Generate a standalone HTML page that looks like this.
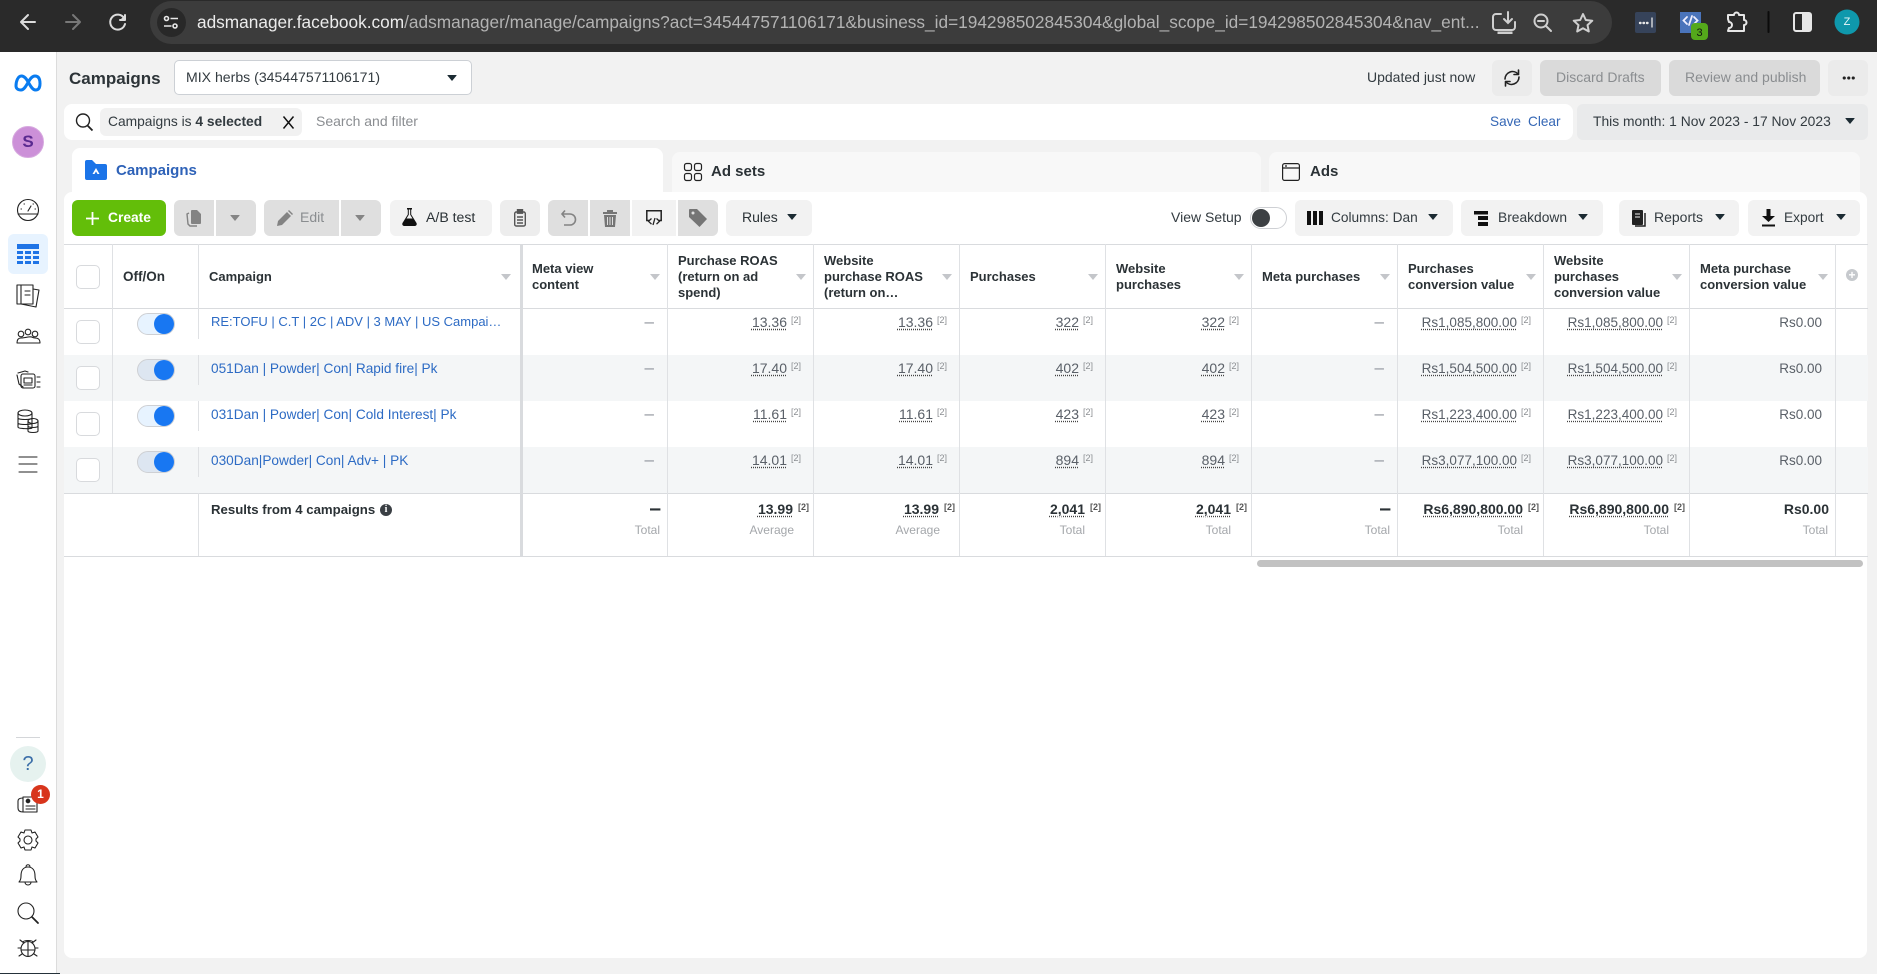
<!DOCTYPE html>
<html><head><meta charset="utf-8"><title>Campaigns</title>
<style>
*{box-sizing:border-box}
html,body{margin:0;padding:0;width:1877px;height:974px;overflow:hidden;background:#f2f2f2;font-family:"Liberation Sans",Arial,sans-serif;color:#1c2b33}
.a,.t,svg.a{position:absolute}
.t{white-space:nowrap;line-height:16px;font-size:14px}
.b{position:absolute;top:200px;height:36px;border-radius:6px;background:#f2f2f2}
.g{background:#dfdfdf}
.car{position:absolute;width:0;height:0;border-left:5.500px solid transparent;border-right:5.500px solid transparent;border-top:6.500px solid #1c2b33;border-radius:1px}
.hc{position:absolute;top:274px;width:0;height:0;border-left:5px solid transparent;border-right:5px solid transparent;border-top:6px solid #c4c6ca}
.v{position:absolute;top:244px;width:1px;height:312px;background:#dfe1e4}
.h{position:absolute;left:64px;width:1804px;height:1px;background:#d9dbde}
.th{position:absolute;font-weight:700;font-size:13px;line-height:16px;white-space:nowrap;color:#2b3236}
.cb{position:absolute;left:76px;width:24px;height:24px;border:1px solid #d8dadd;border-radius:5px;background:#fff}
.tg{position:absolute;left:137px;width:38px;height:22px;border-radius:11px;background:#e7f3ff;border:1px solid #ced0d4}
.tg.k{background:#dde6f1}
.tg:after{content:"";position:absolute;right:0;top:0;width:20px;height:20px;border-radius:50%;background:#1877f2}
.n{position:absolute;left:211px;font-size:13.650px;line-height:16px;margin-top:1px;color:#2d6bc4;white-space:nowrap}
.c{position:absolute;width:146px;height:20px;padding-right:13px;text-align:right;font-size:14px;line-height:16px;color:#5a6068;white-space:nowrap}
.m{font-size:13.500px;margin-top:1px}
.c u{text-decoration:underline dotted #444;text-underline-offset:2px}
.c sup{font-size:9px;line-height:0;vertical-align:4px;margin-left:4px;color:#8a8d91;display:inline-block;width:9px;text-align:right}
.d{color:#90949c;font-size:17px}
.s{font-weight:700;color:#2b3236;padding-right:6px}
.s.e{font-size:21px}
.s sup{color:#555;margin-left:5px}
.l{position:absolute;font-size:12px;line-height:14px;color:#a4a7ab;text-align:right;width:146px;white-space:nowrap}
svg{overflow:visible}
</style></head><body>

<!-- browser chrome -->
<div class="a" style="left:0;top:0;width:1877px;height:52px;background:#2a2a2a"></div>
<svg class="a" style="left:0;top:0" width="130" height="52" fill="none" stroke-linecap="round" stroke-linejoin="round">
<path d="M35 22H21M28 15 21 22 28 29" stroke="#dcdcdc" stroke-width="2"/>
<path d="M66 22H80M73 15 80 22 73 29" stroke="#787878" stroke-width="2"/>
<path d="M124 18a7.500 7.500 0 1 0 1 6" stroke="#dcdcdc" stroke-width="2"/><path d="M125 15v5h-5" stroke="#dcdcdc" stroke-width="2" fill="#dcdcdc"/>
</svg>
<div class="a" style="left:150px;top:1px;width:1462px;height:43px;border-radius:22px;background:#3c3c3c"></div>
<div class="a" style="left:157px;top:8px;width:29px;height:29px;border-radius:50%;background:#282828"></div>
<svg class="a" style="left:163px;top:15px" width="16" height="15" fill="none" stroke="#e8e8e8" stroke-width="1.600"><circle cx="3.500" cy="3.500" r="2"/><path d="M7.500 3.500H15M1 11h7.500"/><circle cx="12" cy="11" r="2"/></svg>
<div class="t" style="left:197px;top:12px;font-size:17.250px;line-height:20px;color:#ececec">adsmanager.facebook.com<span style="color:#b3b3b3">/adsmanager/manage/campaigns?act=345447571106171&amp;business_id=194298502845304&amp;global_scope_id=194298502845304&amp;nav_ent...</span></div>
<svg class="a" style="left:1480px;top:0" width="397" height="52" fill="none" stroke-linecap="round">
<path d="M21 14h-5a3 3 0 0 0-3 3v10a3 3 0 0 0 3 3h16a3 3 0 0 0 3-3v-5" stroke="#cfcfcf" stroke-width="2"/>
<path d="M28 12v11M24 19l4 4 4-4" stroke="#cfcfcf" stroke-width="2"/><path d="M18 32h14v1.500H18z" fill="#cfcfcf" stroke="#cfcfcf"/>
<circle cx="61" cy="21" r="6.500" stroke="#cfcfcf" stroke-width="2"/><path d="M66 26l5 5M58 21h6" stroke="#cfcfcf" stroke-width="2"/>
<path d="M103 14l2.800 6 6.500.7-4.800 4.400 1.300 6.400-5.800-3.300-5.800 3.300 1.300-6.400-4.800-4.400 6.500-.7z" stroke="#cfcfcf" stroke-width="2" stroke-linejoin="round"/>
<rect x="155" y="12" width="21" height="21" rx="2" fill="#36435a"/><path d="M160 23h8" stroke="#e8e8e8" stroke-width="2.400" stroke-dasharray=".5 3"/><path d="M172 18v9" stroke="#e8e8e8" stroke-width="1.300"/>
<rect x="200" y="12" width="21" height="21" fill="#4a74bb"/><path d="M207 17l-3.500 3.500 3.500 3.500M214 17l3.500 3.500-3.500 3.500M212 16l-3 9" stroke="#eef" stroke-width="1.800"/>
<rect x="211" y="23" width="17" height="17" rx="4" fill="#54a81b"/>
<path d="M248 15h6a2.500 2.500 0 0 1 5 0h5v5a2.500 2.500 0 0 1 0 5v6h-16l1-3a3 3 0 0 0 0-6l-1-3z" stroke="#e6e6e6" stroke-width="2" stroke-linejoin="round"/>
<path d="M288.500 12v20" stroke="#0b0b0b" stroke-width="2"/>
<rect x="314" y="13" width="17" height="18" rx="2" stroke="#e6e6e6" stroke-width="2"/><rect x="322" y="13" width="9" height="18" fill="#e6e6e6"/>
<circle cx="367" cy="22" r="12.500" fill="#0f98ac"/>
</svg>
<div class="t" style="left:1691px;top:25px;width:17px;text-align:center;font-size:11px;color:#111">3</div>
<div class="t" style="left:1840px;top:14px;width:14px;text-align:center;font-size:11px;color:#e8f7f9">Z</div>

<!-- sidebar -->
<div class="a" style="left:0;top:52px;width:57px;height:922px;background:#fff;border-right:1px solid #dcdcdc"></div>
<div class="a" style="left:0;top:973px;width:60px;height:1px;background:#25323a"></div>
<svg class="a" style="left:14px;top:73px" width="28" height="19" fill="none"><path d="M2 13C2 8 4 3 7.500 3c3 0 5 3 7 6.500s4 7.500 7 7.500c3 0 4.500-2 4.500-6.500S24.500 3 21 3c-3 0-5 3-7 6.500S10 17 7 17c-3 0-5-1.500-5-4z" stroke="#0a7cf0" stroke-width="3"/></svg>
<div class="a" style="left:12px;top:126px;width:32px;height:32px;border-radius:50%;background:#cc90d8;border:1px solid #d7a9df;text-align:center;font:700 17px/30px 'Liberation Sans',sans-serif;color:#5a2a90">S</div>
<div class="a" style="left:8px;top:234px;width:40px;height:40px;border-radius:6px;background:#e7f3ff"></div>
<svg class="a" style="left:0;top:190px" width="57" height="300" fill="none" stroke="#222" stroke-width="1.100" stroke-linecap="round" stroke-linejoin="round">
<circle cx="28" cy="20" r="10.500"/><path d="M18 24h20" /><path d="M28 21l3-5M21 19h.5M24 14h.5M33 14h.5M35 19h.5"/>
<g stroke="none" fill="#1f74e6"><rect x="17" y="54" width="22" height="5"/><rect x="17" y="61" width="6" height="3"/><rect x="25" y="61" width="6" height="3"/><rect x="33" y="61" width="6" height="3"/><rect x="17" y="66" width="6" height="3"/><rect x="25" y="66" width="6" height="3"/><rect x="33" y="66" width="6" height="3"/><rect x="17" y="71" width="6" height="3"/><rect x="25" y="71" width="6" height="3"/><rect x="33" y="71" width="6" height="3"/></g>
<path d="M17 95h16v19H17zM21 95v19M25 101h5M25 105h5M33 99l6 1-3 17-15-3"/>
<circle cx="21" cy="144" r="2.800"/><circle cx="28" cy="142" r="2.800"/><circle cx="35" cy="144" r="2.800"/><path d="M17 153c0-4 2-5 4-5s2 0 7-1 4 1 7 1 5 1 5 5H17z"/>
<path d="M18 183l7-2 3 1M17 185l2 9 4 3"/><rect x="21" y="184" width="14" height="14" rx="2"/><path d="M24 188h8v5h-8zM24 195h8M37 187h3M37 192h3M37 197h3"/>
<ellipse cx="25" cy="223" rx="7" ry="3"/><path d="M18 223v14c0 2 14 2 14 1V223M18 228c0 2 14 2 14 0M18 233c0 2 14 2 14 0"/><ellipse cx="33" cy="231" rx="5" ry="2.500"/><path d="M28 231v10c0 2 10 2 10 0v-10M28 236c0 2 10 2 10 0"/>
<path d="M19 267h18M19 274h18M19 282h18"/>
</svg>
<div class="a" style="left:16px;top:737px;width:24px;height:1px;background:#d4d6d9"></div>
<div class="a" style="left:10px;top:746px;width:36px;height:36px;border-radius:50%;background:#e6f2ef;text-align:center;font:20px/36px 'Liberation Sans',sans-serif;color:#3b6ea8">?</div>
<svg class="a" style="left:0;top:790px" width="57" height="175" fill="none" stroke="#222" stroke-width="1.100" stroke-linecap="round" stroke-linejoin="round">
<path d="M23 7h14v15H23c-3 0-5-1-5-4v-7c0-2 2-3 5-3zM23 7v15"/><circle cx="28" cy="11" r="1.800" fill="#222"/><path d="M26 16h9M26 19h9"/>
<circle cx="28" cy="50" r="4"/><path d="M25 40h6l1 3 3-1 3 5-2 2v2l2 2-3 5-3-1-1 3h-6l-1-3-3 1-3-5 2-2v-2l-2-2 3-5 3 1z"/>
<path d="M28 77c-5 0-7 4-7 9 0 3-1 5-2 6h18c-1-1-2-3-2-6 0-5-2-9-7-9zM26 77c0-3 4-3 4 0M25 92c0 4 6 4 6 0"/>
<circle cx="26" cy="121" r="8"/><path d="M32 127l6 6" stroke-width="1.800"/>
<path d="M28 152v14M21 160h14"/><ellipse cx="28" cy="159" rx="7" ry="7.500"/><path d="M20 150l4 3M36 150l-4 3M18 158h3M35 158h3M19 166l3-2M37 166l-3-2M23 152c1-2 9-2 10 0"/>
</svg>
<div class="a" style="left:31px;top:785px;width:19px;height:19px;border-radius:50%;background:#d8351c;color:#fff;text-align:center;font:700 12px/19px 'Liberation Sans',sans-serif">1</div>

<!-- top header -->
<div class="t" style="left:69px;top:70px;font-size:17px;line-height:18px;font-weight:700;color:#2d3438">Campaigns</div>
<div class="a" style="left:174px;top:60px;width:298px;height:35px;background:#fff;border:1px solid #ccd0d5;border-radius:5px"></div>
<div class="t" style="left:186px;top:69px;font-size:14.100px;color:#333b40">MIX herbs (345447571106171)</div>
<div class="car" style="left:447px;top:75px"></div>
<div class="t" style="left:1367px;top:69px;color:#333b40">Updated just now</div>
<div class="a" style="left:1492px;top:60px;width:40px;height:36px;border-radius:6px;background:#ebebeb"></div>
<svg class="a" style="left:1492px;top:60px" width="40" height="36" fill="none" stroke="#222" stroke-width="1.600" stroke-linecap="round" stroke-linejoin="round"><path d="M26 14a7.500 7.500 0 0 0-13 5M14 22a7.500 7.500 0 0 0 13-5"/><path d="M26.500 10v4.500H22M13.500 26v-4.500H18"/></svg>
<div class="a" style="left:1540px;top:60px;width:121px;height:36px;border-radius:6px;background:#dadada"></div>
<div class="t" style="left:1556px;top:69px;color:#8a8d90">Discard Drafts</div>
<div class="a" style="left:1669px;top:60px;width:151px;height:36px;border-radius:6px;background:#dadada"></div>
<div class="t" style="left:1685px;top:69px;color:#8a8d90">Review and publish</div>
<div class="a" style="left:1828px;top:60px;width:40px;height:36px;border-radius:6px;background:#ebebeb"></div>
<div class="a" style="left:1842px;top:76px;width:13px;height:4px;background:radial-gradient(circle,#222 1.500px,transparent 1.700px) 0 0/4.500px 4px"></div>

<!-- search row -->
<div class="a" style="left:64px;top:104px;width:1509px;height:36px;border-radius:8px;background:#fff"></div>
<svg class="a" style="left:75px;top:113px" width="20" height="18" fill="none" stroke="#222" stroke-width="1.400"><circle cx="8" cy="7.500" r="6.500"/><path d="M12.500 12.500l5 5" stroke-width="1.800"/></svg>
<div class="a" style="left:100px;top:108px;width:202px;height:28px;border-radius:6px;background:#f1f1f1"></div>
<div class="t" style="left:108px;top:114px;font-size:13.800px;color:#333b40">Campaigns is <b>4 selected</b></div>
<svg class="a" style="left:283px;top:116px" width="11" height="13" stroke="#111" stroke-width="1.500"><path d="M.500.500l10 12M10.500.500l-10 12"/></svg>
<div class="t" style="left:316px;top:113px;color:#8a8d91">Search and filter</div>
<div class="t" style="left:1490px;top:114px;font-size:13.600px;color:#3567b5">Save</div>
<div class="t" style="left:1528px;top:114px;font-size:13.600px;color:#3567b5">Clear</div>
<div class="a" style="left:1577px;top:104px;width:291px;height:36px;border-radius:6px;background:#e9eaeb"></div>
<div class="t" style="left:1593px;top:113px;font-size:13.850px;color:#333b40">This month: 1 Nov 2023 - 17 Nov 2023</div>
<div class="car" style="left:1845px;top:118px"></div>

<!-- tabs -->
<div class="a" style="left:72px;top:148px;width:591px;height:50px;background:#fff;border-radius:8px 8px 0 0"></div>
<div class="a" style="left:672px;top:152px;width:589px;height:46px;background:#f8f8f8;border-radius:8px 8px 0 0"></div>
<div class="a" style="left:1269px;top:152px;width:591px;height:46px;background:#f8f8f8;border-radius:8px 8px 0 0"></div>
<svg class="a" style="left:85px;top:160px" width="22" height="20"><path d="M0 2a2 2 0 0 1 2-2h5l4 4h9a2 2 0 0 1 2 2v12a2 2 0 0 1-2 2H2a2 2 0 0 1-2-2z" fill="#1b74e8"/><path d="M11 8l3.500 6h-2L11 11.500 9.500 14h-2z" fill="#fff"/></svg>
<div class="t" style="left:116px;top:163px;font-size:15px;font-weight:700;color:#2e62b8">Campaigns</div>
<svg class="a" style="left:684px;top:163px" width="18" height="18" fill="none" stroke="#222" stroke-width="1.200"><rect x=".5" y=".5" width="7" height="7" rx="2"/><rect x="10.500" y=".5" width="7" height="7" rx="2"/><rect x=".5" y="10.500" width="7" height="7" rx="2"/><rect x="10.500" y="10.500" width="7" height="7" rx="2"/></svg>
<div class="t" style="left:711px;top:164px;font-size:15px;font-weight:700;color:#2b3236">Ad sets</div>
<svg class="a" style="left:1282px;top:163px" width="18" height="18" fill="none" stroke="#222" stroke-width="1.200"><rect x=".6" y=".6" width="16.800" height="16.800" rx="2"/><path d="M1 5h16M3 3h2"/></svg>
<div class="t" style="left:1310px;top:164px;font-size:15px;font-weight:700;color:#2b3236">Ads</div>

<!-- main card -->
<div class="a" style="left:64px;top:192px;width:1803px;height:766px;background:#fff;border-radius:8px"></div>

<!-- toolbar left -->
<div class="b" style="left:72px;width:94px;background:#63be09"></div>
<svg class="a" style="left:86px;top:212px" width="13" height="13" stroke="#fff" stroke-width="1.800"><path d="M6.500 0v13M0 6.500h13"/></svg>
<div class="t" style="left:108px;top:210px;font-size:13.800px;font-weight:700;color:#fff">Create</div>
<div class="b g" style="left:174px;width:40px;border-radius:6px 0 0 6px"></div>
<svg class="a" style="left:185px;top:209px" width="18" height="18"><path d="M7 1h5l4 4v9a1 1 0 0 1-1 1H7a1 1 0 0 1-1-1V2a1 1 0 0 1 1-1z" fill="#838383"/><path d="M4 4L2 5l1 10 2 2h7" fill="none" stroke="#838383" stroke-width="1.400"/></svg>
<div class="b g" style="left:216px;width:40px;border-radius:0 6px 6px 0"></div>
<div class="car" style="left:230px;top:215px;border-top-color:#858585"></div>
<div class="b g" style="left:264px;width:75px;border-radius:6px 0 0 6px"></div>
<svg class="a" style="left:277px;top:210px" width="16" height="16"><path d="M0 16l1-5L10 2l4 4-9 9zM11 1l1-1 4 4-1 1z" fill="#838383"/></svg>
<div class="t" style="left:300px;top:209px;color:#8a8d90">Edit</div>
<div class="b g" style="left:341px;width:40px;border-radius:0 6px 6px 0"></div>
<div class="car" style="left:355px;top:215px;border-top-color:#858585"></div>
<div class="b" style="left:390px;width:102px"></div>
<svg class="a" style="left:402px;top:208px" width="15" height="18"><path d="M5 0h5v1.500H9.200v5L14.500 15a2 2 0 0 1-1.700 3H2.200A2 2 0 0 1 .5 15L5.800 6.500v-5H5z" fill="#111"/><path d="M6.800 1.500v5.300L4.500 10.500h6L8.200 6.800V1.500z" fill="#f2f2f2"/></svg>
<div class="t" style="left:426px;top:209px;font-size:14.100px;color:#2b3236">A/B test</div>
<div class="b" style="left:500px;width:40px;background:#ededed"></div>
<svg class="a" style="left:514px;top:209px" width="12" height="18" fill="none" stroke="#555" stroke-width="1.400"><rect x=".7" y="3" width="10.600" height="14" rx="1.500"/><rect x="3.500" y=".7" width="5" height="3.500" fill="#555"/><path d="M3 8h6M3 11h6M3 14h6"/></svg>
<div class="b g" style="left:548px;width:40px;border-radius:6px 0 0 6px"></div>
<svg class="a" style="left:561px;top:209px" width="14" height="18" fill="none" stroke="#838383" stroke-width="1.600"><path d="M1 5h8a4.500 4.500 0 0 1 0 11H3M4 1.500L1 5l3 3.500"/></svg>
<div class="b g" style="left:590px;width:40px;border-radius:0"></div>
<svg class="a" style="left:603px;top:209px" width="14" height="18"><path d="M0 3h14v2H0zM4 1h6v2H4zM1 6h12l-1 12H2z" fill="#757575"/><path d="M4.500 8v8M7 8v8M9.500 8v8" stroke="#dfdfdf"/></svg>
<div class="b" style="left:632px;width:44px;border-radius:0"></div>
<svg class="a" style="left:646px;top:210px" width="16" height="16" fill="none" stroke="#222" stroke-width="1.500"><path d="M3 10.500H.8V.8h14.400v9.700H13"/><path d="M5.500 8.500l-3 2.800 3 2.800M10.500 8.500l3 2.800-3 2.800M9 8l-2 7" stroke-width="1.300"/></svg>
<div class="b g" style="left:678px;width:40px;border-radius:0 6px 6px 0"></div>
<svg class="a" style="left:689px;top:209px" width="18" height="18"><path d="M0 1a1 1 0 0 1 1-1h7l10 10-7.500 8L0 8z" fill="#757575"/><circle cx="4" cy="4" r="1.500" fill="#dfdfdf"/></svg>
<div class="b" style="left:726px;width:86px"></div>
<div class="t" style="left:742px;top:209px;color:#2b3236">Rules</div>
<div class="car" style="left:787px;top:214px"></div>

<!-- toolbar right -->
<div class="t" style="left:1171px;top:209px;color:#333b40">View Setup</div>
<div class="a" style="left:1250px;top:207px;width:37px;height:22px;border-radius:11px;border:1px solid #ced0d4;background:#fff"></div>
<div class="a" style="left:1252px;top:209px;width:18px;height:18px;border-radius:50%;background:#3c4043"></div>
<div class="b" style="left:1295px;width:158px"></div>
<svg class="a" style="left:1307px;top:211px" width="16" height="14" fill="#111"><rect width="4" height="14"/><rect x="6" width="4" height="14"/><rect x="12" width="4" height="14"/></svg>
<div class="t" style="left:1331px;top:210px;font-size:13.700px;color:#333b40">Columns: Dan</div>
<div class="car" style="left:1428px;top:214px"></div>
<div class="b" style="left:1461px;width:142px"></div>
<svg class="a" style="left:1474px;top:211px" width="14" height="15" fill="#111"><rect width="14" height="3.500"/><rect x="4" y="5" width="10" height="4"/><rect x="4" y="11" width="10" height="4"/></svg>
<div class="t" style="left:1498px;top:210px;font-size:13.800px;color:#333b40">Breakdown</div>
<div class="car" style="left:1578px;top:214px"></div>
<div class="b" style="left:1619px;width:120px"></div>
<svg class="a" style="left:1632px;top:210px" width="15" height="17"><rect width="11" height="15" rx="1" fill="#222"/><path d="M3 4h5M3 7h5" stroke="#f2f2f2"/><path d="M13 3v13H3" fill="none" stroke="#222" stroke-width="1.500"/></svg>
<div class="t" style="left:1654px;top:209px;color:#333b40">Reports</div>
<div class="car" style="left:1715px;top:214px"></div>
<div class="b" style="left:1748px;width:112px"></div>
<svg class="a" style="left:1762px;top:209px" width="13" height="18"><path d="M4.500 0h4v7H13L6.500 13 0 7h4.500z" fill="#111"/><rect y="15.500" width="13" height="2" fill="#111"/></svg>
<div class="t" style="left:1784px;top:210px;font-size:13.700px;color:#333b40">Export</div>
<div class="car" style="left:1836px;top:214px"></div>

<!-- table bg -->
<div class="a" style="left:64px;top:355px;width:1804px;height:46px;background:#f4f6f7"></div>
<div class="a" style="left:64px;top:447px;width:1804px;height:46px;background:#f4f6f7"></div>
<div class="h" style="top:244px"></div><div class="h" style="top:308px"></div><div class="h" style="top:493px"></div><div class="h" style="top:556px"></div>
<div class="v" style="left:112px;height:249px"></div>
<div class="a" style="left:198px;top:244px;width:1px;height:64px;background:#dfe1e4"></div>
<div class="a" style="left:198px;top:308px;width:1px;height:31px;background:#dfe1e4"></div>
<div class="a" style="left:198px;top:355px;width:1px;height:30px;background:#dfe1e4"></div>
<div class="a" style="left:198px;top:401px;width:1px;height:30px;background:#dfe1e4"></div>
<div class="a" style="left:198px;top:447px;width:1px;height:30px;background:#dfe1e4"></div>
<div class="a" style="left:198px;top:493px;width:1px;height:63px;background:#dfe1e4"></div>
<div class="v" style="left:520px;width:3px;background:#d9dbde"></div>
<div class="v" style="left:667px"></div><div class="v" style="left:813px"></div><div class="v" style="left:959px"></div><div class="v" style="left:1105px"></div><div class="v" style="left:1251px"></div><div class="v" style="left:1397px"></div><div class="v" style="left:1543px"></div><div class="v" style="left:1689px"></div><div class="v" style="left:1835px"></div>

<!-- table head -->
<div class="cb" style="top:265px"></div>
<div class="th" style="left:123px;top:269px;font-size:13.500px">Off/On</div>
<div class="th" style="left:209px;top:269px">Campaign</div>
<div class="th" style="left:532px;top:261px">Meta view<br>content</div>
<div class="th" style="left:678px;top:253px">Purchase ROAS<br>(return on ad<br>spend)</div>
<div class="th" style="left:824px;top:253px">Website<br>purchase ROAS<br>(return on…</div>
<div class="th" style="left:970px;top:269px">Purchases</div>
<div class="th" style="left:1116px;top:261px">Website<br>purchases</div>
<div class="th" style="left:1262px;top:269px">Meta purchases</div>
<div class="th" style="left:1408px;top:261px">Purchases<br>conversion value</div>
<div class="th" style="left:1554px;top:253px">Website<br>purchases<br>conversion value</div>
<div class="th" style="left:1700px;top:261px">Meta purchase<br>conversion value</div>
<div class="hc" style="left:501px"></div><div class="hc" style="left:650px"></div><div class="hc" style="left:796px"></div><div class="hc" style="left:942px"></div><div class="hc" style="left:1088px"></div><div class="hc" style="left:1234px"></div><div class="hc" style="left:1380px"></div><div class="hc" style="left:1526px"></div><div class="hc" style="left:1672px"></div><div class="hc" style="left:1818px"></div>
<div class="a" style="left:1846px;top:269px;width:12px;height:12px;border-radius:50%;background:#c6c9cd;color:#fff;text-align:center;font:700 12px/12px 'Liberation Sans',sans-serif">+</div>

<!-- row 1 -->
<div class="cb" style="top:320px"></div><div class="tg" style="top:313px"></div>
<div class="n" style="top:314px;font-size:13px;margin-top:0">RE:TOFU | C.T | 2C | ADV | 3 MAY | US Campai…</div>
<div class="c d" style="left:521px;top:314px">–</div>
<div class="c" style="left:667px;top:314px"><u>13.36</u><sup>[2]</sup></div>
<div class="c" style="left:813px;top:314px"><u>13.36</u><sup>[2]</sup></div>
<div class="c" style="left:959px;top:314px"><u>322</u><sup>[2]</sup></div>
<div class="c" style="left:1105px;top:314px"><u>322</u><sup>[2]</sup></div>
<div class="c d" style="left:1251px;top:314px">–</div>
<div class="c m" style="left:1397px;top:314px"><u>Rs1,085,800.00</u><sup>[2]</sup></div>
<div class="c m" style="left:1543px;top:314px"><u>Rs1,085,800.00</u><sup>[2]</sup></div>
<div class="c m" style="left:1689px;top:314px">Rs0.00</div>

<!-- row 2 -->
<div class="cb" style="top:366px"></div><div class="tg k" style="top:359px"></div>
<div class="n" style="top:360px">051Dan | Powder| Con| Rapid fire| Pk</div>
<div class="c d" style="left:521px;top:360px">–</div>
<div class="c" style="left:667px;top:360px"><u>17.40</u><sup>[2]</sup></div>
<div class="c" style="left:813px;top:360px"><u>17.40</u><sup>[2]</sup></div>
<div class="c" style="left:959px;top:360px"><u>402</u><sup>[2]</sup></div>
<div class="c" style="left:1105px;top:360px"><u>402</u><sup>[2]</sup></div>
<div class="c d" style="left:1251px;top:360px">–</div>
<div class="c m" style="left:1397px;top:360px"><u>Rs1,504,500.00</u><sup>[2]</sup></div>
<div class="c m" style="left:1543px;top:360px"><u>Rs1,504,500.00</u><sup>[2]</sup></div>
<div class="c m" style="left:1689px;top:360px">Rs0.00</div>

<!-- row 3 -->
<div class="cb" style="top:412px"></div><div class="tg" style="top:405px"></div>
<div class="n" style="top:406px">031Dan | Powder| Con| Cold Interest| Pk</div>
<div class="c d" style="left:521px;top:406px">–</div>
<div class="c" style="left:667px;top:406px"><u>11.61</u><sup>[2]</sup></div>
<div class="c" style="left:813px;top:406px"><u>11.61</u><sup>[2]</sup></div>
<div class="c" style="left:959px;top:406px"><u>423</u><sup>[2]</sup></div>
<div class="c" style="left:1105px;top:406px"><u>423</u><sup>[2]</sup></div>
<div class="c d" style="left:1251px;top:406px">–</div>
<div class="c m" style="left:1397px;top:406px"><u>Rs1,223,400.00</u><sup>[2]</sup></div>
<div class="c m" style="left:1543px;top:406px"><u>Rs1,223,400.00</u><sup>[2]</sup></div>
<div class="c m" style="left:1689px;top:406px">Rs0.00</div>

<!-- row 4 -->
<div class="cb" style="top:458px"></div><div class="tg k" style="top:451px"></div>
<div class="n" style="top:452px">030Dan|Powder| Con| Adv+ | PK</div>
<div class="c d" style="left:521px;top:452px">–</div>
<div class="c" style="left:667px;top:452px"><u>14.01</u><sup>[2]</sup></div>
<div class="c" style="left:813px;top:452px"><u>14.01</u><sup>[2]</sup></div>
<div class="c" style="left:959px;top:452px"><u>894</u><sup>[2]</sup></div>
<div class="c" style="left:1105px;top:452px"><u>894</u><sup>[2]</sup></div>
<div class="c d" style="left:1251px;top:452px">–</div>
<div class="c m" style="left:1397px;top:452px"><u>Rs3,077,100.00</u><sup>[2]</sup></div>
<div class="c m" style="left:1543px;top:452px"><u>Rs3,077,100.00</u><sup>[2]</sup></div>
<div class="c m" style="left:1689px;top:452px">Rs0.00</div>

<!-- summary -->
<div class="t" style="left:211px;top:502px;font-size:13.200px;font-weight:700;color:#2b3236">Results from 4 campaigns</div>
<div class="a" style="left:380px;top:504px;width:12px;height:12px;border-radius:50%;background:#3a3f44;color:#fff;text-align:center;font:700 10px/12px 'Liberation Serif',serif">i</div>
<div class="c s e" style="left:521px;top:501px">–</div>
<div class="c s" style="left:667px;top:501px"><u>13.99</u><sup>[2]</sup></div>
<div class="c s" style="left:813px;top:501px"><u>13.99</u><sup>[2]</sup></div>
<div class="c s" style="left:959px;top:501px"><u>2,041</u><sup>[2]</sup></div>
<div class="c s" style="left:1105px;top:501px"><u>2,041</u><sup>[2]</sup></div>
<div class="c s e" style="left:1251px;top:501px">–</div>
<div class="c s" style="left:1397px;top:501px"><u>Rs6,890,800.00</u><sup>[2]</sup></div>
<div class="c s" style="left:1543px;top:501px"><u>Rs6,890,800.00</u><sup>[2]</sup></div>
<div class="c s" style="left:1689px;top:501px">Rs0.00</div>
<div class="l" style="left:514px;top:523px">Total</div>
<div class="l" style="left:648px;top:523px">Average</div>
<div class="l" style="left:794px;top:523px">Average</div>
<div class="l" style="left:939px;top:523px">Total</div>
<div class="l" style="left:1085px;top:523px">Total</div>
<div class="l" style="left:1244px;top:523px">Total</div>
<div class="l" style="left:1377px;top:523px">Total</div>
<div class="l" style="left:1523px;top:523px">Total</div>
<div class="l" style="left:1682px;top:523px">Total</div>

<!-- scrollbar -->
<div class="a" style="left:1257px;top:560px;width:606px;height:7px;border-radius:4px;background:#c2c2c2"></div>
</body></html>
